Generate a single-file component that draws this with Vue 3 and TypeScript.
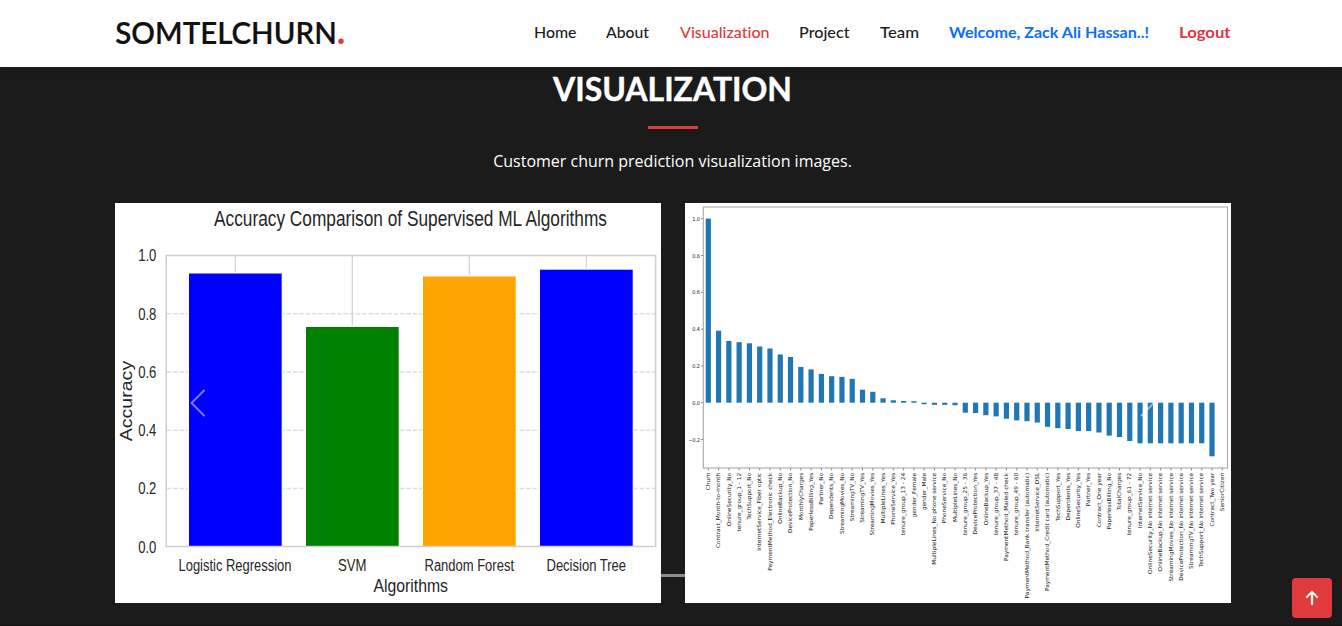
<script setup lang="ts">
interface NavItem { label: string; kind: string; left: number; width: number }
interface Algo { label: string; x: number; top: number; color: string; tx: number; tw: number }

const nav: NavItem[] = [
  { label: 'Home', kind: '', left: 0, width: 42.5 },
  { label: 'About', kind: '', left: 30, width: 43 },
  { label: 'Visualization', kind: 'active', left: 30.5, width: 89.5 },
  { label: 'Project', kind: '', left: 30, width: 50.5 },
  { label: 'Team', kind: '', left: 30, width: 39 },
  { label: 'Welcome, Zack Ali Hassan..!', kind: 'user', left: 30, width: 200 },
  { label: 'Logout', kind: 'logout', left: 30, width: 51.5 },
]

const algos: Algo[] = [
  { label: 'Logistic Regression', x: 189, top: 273.5, color: '#0000ff', tx: 178.5, tw: 113 },
  { label: 'SVM', x: 306, top: 327, color: '#008000', tx: 338, tw: 28.5 },
  { label: 'Random Forest', x: 423, top: 276.5, color: '#ffa500', tx: 424.5, tw: 89.5 },
  { label: 'Decision Tree', x: 540, top: 269.7, color: '#0000ff', tx: 546.5, tw: 79.5 },
]
const ticks = [0, 0.2, 0.4, 0.6, 0.8, 1]
const tickY = (v: number): number => 546.7 - v * 291.2

const features: [string, number][] = [
  ['Churn', 218.6], ['Contract_Month-to-month', 330.7], ['OnlineSecurity_No', 341], ['tenure_group_1 - 12', 342.2],
  ['TechSupport_No', 343.3], ['InternetService_Fiber optic', 346.5], ['PaymentMethod_Electronic check', 348.5],
  ['OnlineBackup_No', 354.5], ['DeviceProtection_No', 357], ['MonthlyCharges', 366.9], ['PaperlessBilling_Yes', 369.4],
  ['Partner_No', 373.9], ['Dependents_No', 376.2], ['StreamingMovies_No', 376.9], ['StreamingTV_No', 378.9],
  ['StreamingTV_Yes', 389.7], ['StreamingMovies_Yes', 391.8], ['MultipleLines_Yes', 398.3], ['PhoneService_Yes', 400.3],
  ['tenure_group_13 - 24', 401], ['gender_Female', 401.2], ['gender_Male', 404.2], ['MultipleLines_No phone service', 404.8],
  ['PhoneService_No', 404.8], ['MultipleLines_No', 405.2], ['tenure_group_25 - 36', 412.7], ['DeviceProtection_Yes', 413],
  ['OnlineBackup_Yes', 415.2], ['tenure_group_37 - 48', 416.4], ['PaymentMethod_Mailed check', 418.7],
  ['tenure_group_49 - 60', 420.4], ['PaymentMethod_Bank transfer (automatic)', 421.2], ['InternetService_DSL', 422.5],
  ['PaymentMethod_Credit card (automatic)', 426.8], ['TechSupport_Yes', 428.2], ['Dependents_Yes', 429],
  ['OnlineSecurity_Yes', 431], ['Partner_Yes', 431], ['Contract_One year', 432.5], ['PaperlessBilling_No', 435.6],
  ['TotalCharges', 437], ['tenure_group_61 - 72', 441], ['InternetService_No', 443.3],
  ['OnlineSecurity_No internet service', 443.3], ['OnlineBackup_No internet service', 443.3],
  ['StreamingMovies_No internet service', 443.3], ['DeviceProtection_No internet service', 443.3],
  ['StreamingTV_No internet service', 443.3], ['TechSupport_No internet service', 443.3],
  ['Contract_Two year', 456.3], ['SeniorCitizen', 402.7],
]
const zero = 402.7
const fx = (i: number): number => 708.3 + i * 10.28
const corrTicks: [string, number][] = [
  ['1.0', 218.7], ['0.8', 255.5], ['0.6', 292.3], ['0.4', 329.1], ['0.2', 365.9], ['0.0', 402.7], ['−0.2', 439.5],
]
</script>

<template>
  <div class="page">
    <header class="header">
      <div class="container bar">
        <svg class="logo" width="232" height="40" viewBox="0 0 232 40">
          <text x="0.3" y="29.5" textLength="221.5" lengthAdjust="spacingAndGlyphs">SOMTELCHURN</text>
          <circle cx="226" cy="27.2" r="2.7" />
        </svg>
        <nav class="nav">
          <a
            v-for="n in nav"
            :key="n.label"
            :class="n.kind"
            :style="{ marginLeft: n.left + 'px', width: n.width + 'px' }"
          >
            <svg :width="n.width" height="24">
              <text x="0" y="16.4" :textLength="n.width" lengthAdjust="spacingAndGlyphs">{{ n.label }}</text>
            </svg>
          </a>
        </nav>
      </div>
    </header>

    <section class="section">
      <div class="title">
        <svg width="240" height="40">
          <text x="0" y="27.1" textLength="239" lengthAdjust="spacingAndGlyphs">VISUALIZATION</text>
        </svg>
        <span class="rule"></span>
      </div>
      <p class="lead">Customer churn prediction visualization images.</p>

      <div class="container gallery">
        <svg class="chart" width="546" height="400" viewBox="115 203 546 400">
          <g class="sans">
            <text x="214" y="226.2" font-size="22.3" textLength="393" lengthAdjust="spacingAndGlyphs">Accuracy Comparison of Supervised ML Algorithms</text>
            <g v-for="t in ticks" :key="t">
              <line
                v-if="t > 0 && t < 1"
                x1="167" x2="655" :y1="tickY(t)" :y2="tickY(t)"
                stroke="#dedede" stroke-width="1.5" stroke-dasharray="4.4 1.9"
              />
              <text x="138.2" :y="tickY(t) + 5.8" font-size="16" textLength="18.2" lengthAdjust="spacingAndGlyphs">{{ t.toFixed(1) }}</text>
            </g>
            <g v-for="a in algos" :key="a.label">
              <line :x1="a.x + 46.3" :x2="a.x + 46.3" y1="255" y2="547" stroke="#d2d2d2" stroke-width="1.2" />
              <rect :x="a.x - 1.2" :y="a.top - 1.7" width="95.2" :height="548 - a.top" fill="#fff" />
              <rect :x="a.x" :y="a.top" width="92.7" :height="546.3 - a.top" :fill="a.color" />
              <text :x="a.tx" y="571" font-size="15.8" :textLength="a.tw" lengthAdjust="spacingAndGlyphs">{{ a.label }}</text>
            </g>
            <rect x="166.2" y="255.5" width="489.4" height="291" fill="none" stroke="#cfcfcf" stroke-width="1.5" />
            <text x="373.5" y="592.3" font-size="19" textLength="74.5" lengthAdjust="spacingAndGlyphs">Algorithms</text>
            <text transform="translate(132 441.3) rotate(-90)" font-size="16.3" textLength="80.5" lengthAdjust="spacingAndGlyphs">Accuracy</text>
          </g>
        </svg>

        <svg class="chart" width="546" height="400" viewBox="685 203 546 400">
          <rect x="703.3" y="207" width="524.2" height="261" fill="none" stroke="#a9a9a9" stroke-width="1.1" />
          <g class="corr">
            <g v-for="[t, y] in corrTicks" :key="t">
              <line x1="701.2" x2="703" :y1="y" :y2="y" stroke="#666" stroke-width=".8" />
              <text x="700" :y="y + 2.1" text-anchor="end" :textLength="t.length > 3 ? 11.5 : 7.8" lengthAdjust="spacingAndGlyphs">{{ t }}</text>
            </g>
            <g v-for="([f, y], i) in features" :key="f">
              <rect :x="fx(i) - 2.6" :y="Math.min(y, zero)" width="5.2" :height="Math.abs(y - zero)" fill="#1f77b4" />
              <line :x1="fx(i)" :x2="fx(i)" y1="468.3" y2="470.3" stroke="#666" stroke-width=".8" />
              <text :transform="`translate(${fx(i) + 1.7} 472.8) rotate(-90) scale(1.063 1)`" text-anchor="end">{{ f }}</text>
            </g>
          </g>
        </svg>

        <svg class="chevron prev" width="16" height="28"><path d="M14 1.5 1.5 14 14 26.5" /></svg>
        <svg class="chevron next" width="16" height="28"><path d="M1.5 1.5 14 14 1.5 26.5" /></svg>
        <span class="indicator"></span>
      </div>
    </section>

    <button class="top" aria-label="Back to top">
      <svg width="28" height="28" viewBox="0 0 16 16" fill="#fff">
        <path fill-rule="evenodd" stroke="#fff" stroke-width=".2" d="M8 12a.5.5 0 0 0 .5-.5V5.707l2.146 2.147a.5.5 0 0 0 .708-.708l-3-3a.5.5 0 0 0-.708 0l-3 3a.5.5 0 1 0 .708.708L7.5 5.707V11.5a.5.5 0 0 0 .5.5z" />
      </svg>
    </button>
  </div>
</template>

<style>
body { margin: 0; background: #111; overflow: hidden; }
</style>

<style scoped>
.page { position: relative; width: 1342px; height: 626px; overflow: hidden; background: #111; }
.container { width: 1116px; margin-left: 115px; }
.header { position: relative; height: 67px; background: #fff; box-shadow: 0 0 15px rgba(0, 0, 0, .15); z-index: 2; }
.bar { display: flex; justify-content: space-between; align-items: center; height: 67px; }
svg { display: block; }
.logo { font: 600 29.8px Lato, sans-serif; fill: #111; }
.logo text { stroke: #111; stroke-width: .2; }
.logo circle { fill: #e03a3c; }
.nav { display: flex; margin-right: .7px; font: 500 15px Lato, sans-serif; font-variant-ligatures: none; fill: #1c1c1c; }
.nav svg { overflow: visible; }
.nav .active { fill: #e03a3c; }
.nav .user { font-weight: 700; fill: #0d6efd; }
.nav .logout { font-weight: 700; fill: #dc3545; }
.section { height: 558px; background: #1b1b1b; overflow: hidden; color: #fff; }
.title { display: flex; flex-direction: column; align-items: center; padding: 7px 0 0 3px; }
.title svg { font: 700 32px Lato, sans-serif; fill: #fff; stroke: #fff; stroke-width: .4; overflow: visible; }
.rule { width: 50px; height: 3px; margin-top: 12px; background: #e03a3c; }
.lead { margin: 20px 0 0; padding-left: 3px; text-align: center; font: 16px/24px "Open Sans", sans-serif; }
.gallery { position: relative; display: flex; gap: 24px; margin-top: 30px; }
.chart { flex: none; background: #fff; }
.sans { font-family: "Liberation Sans", Arial, sans-serif; fill: #262626; }
.corr { font: 5.5px "DejaVu Sans", sans-serif; fill: #222; }
.chevron { position: absolute; top: 186px; fill: none; stroke: #fff; stroke-width: 1.8; stroke-linecap: round; opacity: .5; }
.prev { left: 75px; }
.next { left: 1024.5px; }
.indicator { position: absolute; left: 546px; top: 371px; width: 24px; height: 3px; background: #8d8d8d; }
.top { position: absolute; left: 1292px; top: 578px; width: 40px; height: 40px; padding: 0; border: 0; border-radius: 4px; background: #e03a3c; display: flex; align-items: center; justify-content: center; z-index: 3; }
</style>
